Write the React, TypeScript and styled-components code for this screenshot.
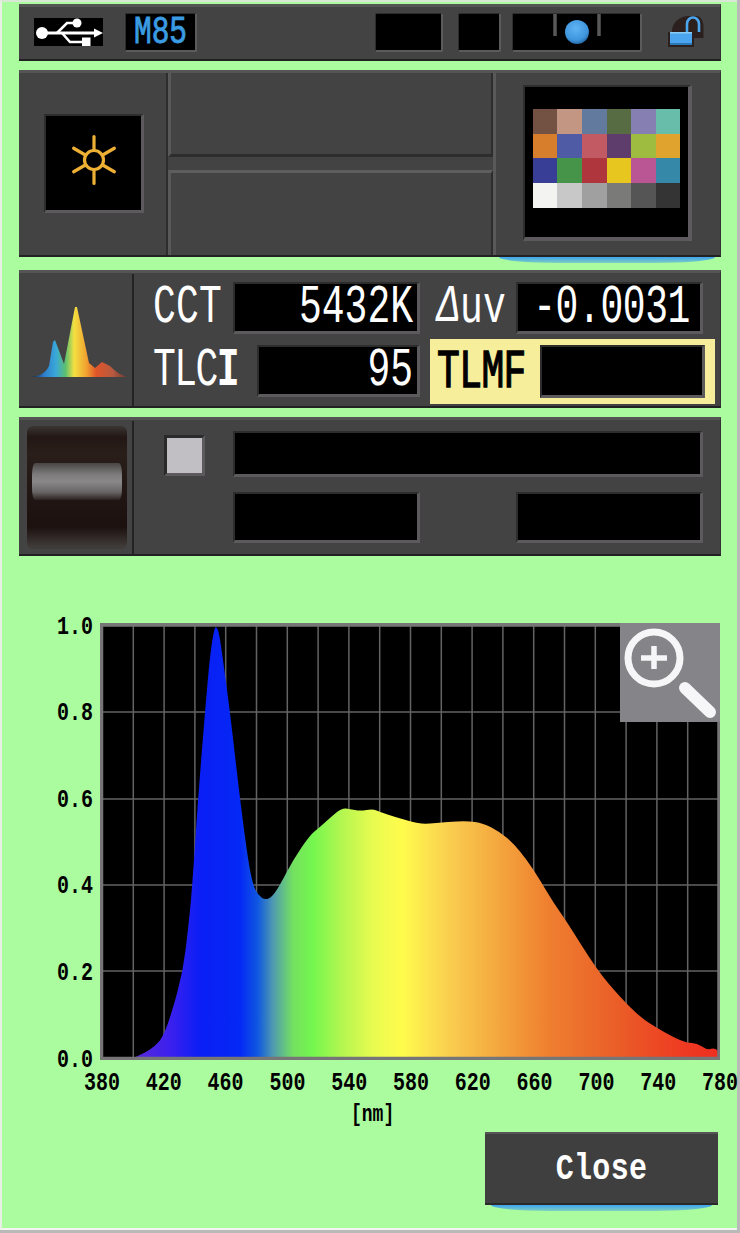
import React from "react";
import styled, { createGlobalStyle } from "styled-components";

const Global = createGlobalStyle`
  html, body { margin: 0; padding: 0; background: #b9b9b9; }
`;

const Page = styled.div`
  width: 740px;
  height: 1233px;
  box-sizing: border-box;
  overflow: hidden;
  background: #b9b9b9;
  padding-right: 3px;
  padding-bottom: 3px;
`;

const Screen = styled.main`
  height: 100%;
  box-sizing: border-box;
  background: #abfb9f;
  border-left: 2px solid #e8f0e6;
  border-top: 2px solid #d8e8d4;
  border-bottom: 2px solid #f2f5f0;
  padding: 2px 0 0 17px;
  display: flex;
  flex-direction: column;
  font-family: "Liberation Mono", "DejaVu Sans Mono", monospace;
`;

const Panel = styled.section<{ $h: number; $mt: number }>`
  width: 702px;
  height: ${(p) => p.$h}px;
  margin-top: ${(p) => p.$mt}px;
  flex: none;
  box-sizing: border-box;
  background: #444344;
  border-top: 3px solid #565556;
  border-bottom: 2px solid #232223;
  border-right: 1px solid #343334;
  display: flex;
`;

const Field = styled.div<{ $w?: number; $h?: number; $radius?: number }>`
  box-sizing: border-box;
  width: ${(p) => (p.$w ? `${p.$w}px` : "auto")};
  height: ${(p) => (p.$h ? `${p.$h}px` : "auto")};
  flex: none;
  background: #000;
  border-top: 2px solid #2e2d2e;
  border-left: 2px solid #2e2d2e;
  border-right: 3px solid #5d5a5e;
  border-bottom: 3px solid #5d5a5e;
  border-radius: ${(p) => p.$radius ?? 0}px;
  display: flex;
  align-items: center;
  justify-content: flex-end;
`;

const StatusBar = styled(Panel)`
  align-items: flex-start;
  padding-top: 6px;
  padding-left: 15px;
`;

const UsbBox = styled.div`
  width: 69px;
  height: 28px;
  margin-top: 5px;
  background: #000;
  flex: none;
  display: flex;
`;

const Memory = styled(Field)`
  margin-left: 22px;
  justify-content: center;
  border-width: 1px 2px 2px 1px;
`;

const MemoryText = styled.span`
  color: #3a9ce2;
  font-size: 29.5px;
  line-height: 36px;
  -webkit-text-stroke: 0.7px #3a9ce2;
  transform: scaleY(1.32);
`;

const StatusSlot = styled(Field)<{ $ml: number }>`
  margin-left: ${(p) => p.$ml}px;
  border-width: 1px 2px 2px 1px;
`;

const LockWrap = styled.div`
  margin-left: 26px;
  margin-top: 2px;
  width: 36px;
  height: 33px;
  flex: none;
  display: flex;
`;

const SceneCell = styled.div`
  width: 149px;
  flex: none;
  box-sizing: border-box;
  border-right: 2px solid #2e2d2e;
  padding: 41px 0 0 25px;
`;

const SunBox = styled(Field)`
  justify-content: center;
  padding-bottom: 6px;
  border-width: 2px 3px 3px 2px;
`;

const NameStack = styled.div`
  width: 325px;
  flex: none;
  display: flex;
  flex-direction: column;
  justify-content: space-between;
`;

const NameTop = styled.div`
  height: 84px;
  box-sizing: border-box;
  border-left: 3px solid #5a595a;
  border-bottom: 3px solid #2e2d2e;
  border-right: 2px solid #2e2d2e;
`;

const NameBottom = styled.div`
  height: 85px;
  box-sizing: border-box;
  border-top: 3px solid #5f5e5f;
  border-left: 3px solid #5a595a;
  border-right: 2px solid #2e2d2e;
`;

const ChartCell = styled.div`
  flex: 1;
  position: relative;
  box-sizing: border-box;
  border-left: 3px solid #5a595a;
  padding: 12px 0 0 27px;
  &::after {
    content: "";
    position: absolute;
    left: 3px;
    right: 5px;
    bottom: -8px;
    height: 6px;
    background: linear-gradient(#3ea4ee, #7fcfc0);
    border-radius: 0 0 60px 60px / 0 0 6px 6px;
  }
`;

const ChartBox = styled(Field)`
  justify-content: center;
  align-items: flex-start;
  padding-top: 22px;
  border-width: 2px 4px 4px 2px;
`;

const Patches = styled.div`
  display: grid;
  grid-template-columns: repeat(6, 24.67px);
  grid-auto-rows: 24.67px;
`;

const Patch = styled.div<{ $c: string }>`
  background: ${(p) => p.$c};
`;

const IconCell = styled.div`
  width: 115px;
  flex: none;
  box-sizing: border-box;
  border-right: 2px solid #242324;
  margin-top: 1px;
  display: flex;
`;

const ReadingArea = styled.div`
  flex: 1;
  padding: 9px 0 0 19px;
  display: flex;
  flex-direction: column;
  gap: 5px;
`;

const ReadingRow = styled.div<{ $h: number }>`
  height: ${(p) => p.$h}px;
  display: flex;
  align-items: flex-start;
`;

const Label = styled.span<{ $w: number; $ml?: number; $mt?: number; $ls?: number }>`
  width: ${(p) => p.$w}px;
  margin-left: ${(p) => p.$ml ?? 0}px;
  margin-top: ${(p) => p.$mt ?? 0}px;
  flex: none;
  color: #fff;
  font-size: 38px;
  line-height: 52px;
  letter-spacing: ${(p) => p.$ls ?? 0.2}px;
  white-space: pre;
  transform: scaleY(1.42);
  transform-origin: 0 50%;
`;

const DarkLabel = styled(Label)`
  color: #000;
  -webkit-text-stroke: 1px #000;
`;

const BoldI = styled.span`
  font-weight: 700;
`;

const Delta = styled.span`
  font-style: italic;
`;

const Value = styled.span`
  color: #fff;
  font-size: 38px;
  line-height: 46px;
  padding-right: 4px;
  white-space: pre;
  transform: scaleY(1.42);
`;

const SlimValue = styled(Value)`
  padding-right: 10px;
  letter-spacing: -0.4px;
`;

const ReadingField = styled(Field)<{ $mt?: number }>`
  margin-top: ${(p) => p.$mt ?? 0}px;
`;

const Highlight = styled.div`
  margin-left: 10px;
  width: 285px;
  height: 65px;
  box-sizing: border-box;
  background: #f6ee9a;
  padding: 6px 0 0 7px;
  display: flex;
  align-items: flex-start;
`;

const Roller = styled.div`
  width: 100px;
  height: 123px;
  margin: 5px 0 0 8px;
  flex: none;
  border-radius: 6px;
  background: linear-gradient(#3a3533 0, #221714 9%, #2a1e1a 22%, #201512 60%, #1c110f 82%, #3f3b39 98%);
  padding: 37px 5px 0;
  box-sizing: border-box;
`;

const RollerBand = styled.div`
  height: 37px;
  border-radius: 3px / 12px;
  background: linear-gradient(#4a4545 0, #7c7a7b 30%, #8a8889 50%, #6a6667 78%, #3a3230 95%, #2a211f 100%);
`;

const FilterGrid = styled.div`
  flex: 1;
  padding: 11px 0 0 0;
  display: grid;
  grid-template-columns: 99px 187px 96px 187px;
  grid-template-rows: 46px 51px;
  row-gap: 15px;
  align-content: start;
`;

const Swatch = styled.div`
  width: 41px;
  height: 41px;
  margin: 4px 0 0 30px;
  box-sizing: border-box;
  background: #c2bfc4;
  border: 3px solid #2b2a2b;
  border-right-color: #5d5a5e;
  border-bottom-color: #5d5a5e;
`;

const WideField = styled(Field)`
  grid-column: 2 / 5;
`;

const SecondField = styled(Field)`
  grid-column: 2;
`;

const ThirdField = styled(Field)`
  grid-column: 4;
`;

const ChartGrid = styled.div`
  margin-top: 61px;
  margin-left: 38px;
  width: 681px;
  display: grid;
  grid-template-columns: 36px 620px;
  column-gap: 7px;
  flex: none;
`;

const YAxis = styled.div`
  height: 450px;
  margin-top: 2px;
  display: flex;
  flex-direction: column;
  justify-content: space-between;
`;

const Tick = styled.span`
  display: block;
  height: 18px;
  color: #000;
  font-size: 20px;
  font-weight: 700;
  line-height: 18px;
  white-space: pre;
  transform: scaleY(1.3);
`;

const Plot = styled.div`
  position: relative;
  width: 620px;
  height: 437px;
  margin-top: 6px;
`;

const ZoomButton = styled.div`
  position: absolute;
  top: 0;
  right: 0;
  width: 100px;
  height: 99px;
  background: #858488;
  display: flex;
`;

const XAxis = styled.div`
  grid-column: 1 / 3;
  margin-top: 5px;
  margin-left: 27px;
  width: 654px;
  display: flex;
  justify-content: space-between;
`;

const XTick = styled(Tick)`
  width: 36px;
  text-align: center;
`;

const Unit = styled(Tick)`
  grid-column: 1 / 3;
  margin: 13px 0 0 294px;
  font-size: 18px;
`;

const CloseButton = styled.div`
  position: relative;
  margin: 9px 0 0 466px;
  width: 233px;
  height: 73px;
  flex: none;
  box-sizing: border-box;
  background: #3f3f40;
  border-top: 2px solid #555;
  border-bottom: 2px solid #2a2a2a;
  color: #fff;
  font-size: 30px;
  font-weight: 700;
  letter-spacing: 0.3px;
  display: flex;
  align-items: center;
  justify-content: center;
  &::after {
    content: "";
    position: absolute;
    left: 6px;
    right: 6px;
    bottom: -8px;
    height: 6px;
    background: linear-gradient(#3ea4ee, #7fcfc0);
    border-radius: 0 0 60px 60px / 0 0 6px 6px;
  }
`;

const CloseText = styled.span`
  transform: scaleY(1.25);
`;

const patches = [
  "#735244", "#c29682", "#627a9d", "#576c43", "#8580b1", "#67bdaa",
  "#d67e2c", "#505ba6", "#c15a63", "#5e3c6c", "#9dbc40", "#e0a32e",
  "#383d96", "#469449", "#af363c", "#e7c71f", "#bb5695", "#3688a8",
  "#f3f3f2", "#c8c8c8", "#a0a0a0", "#7a7a79", "#555555", "#343434",
];

const Usb = () => (
  <svg width="69" height="28" viewBox="0 0 69 28">
    <g fill="#fff" stroke="#fff">
      <circle cx="8" cy="15" r="6" stroke="none" />
      <path d="M8 15H62" strokeWidth="2.8" fill="none" />
      <path d="M60 10.5l9 4.5-9 4.500z" stroke="none" />
      <path d="M23 15l10-10h8" strokeWidth="2.6" fill="none" />
      <path d="M28 15l8 9h14" strokeWidth="2.6" fill="none" />
      <circle cx="43" cy="5" r="4.500" stroke="none" />
      <rect x="48" y="19.500" width="8.500" height="8.500" stroke="none" />
    </g>
  </svg>
);

const Lock = () => (
  <svg width="36" height="33" viewBox="0 0 36 33">
    <path d="M4 17C4 8 10 2 20 1H28C33 1 35.500 6 35.500 12V23H26V32H0V17Z" fill="#2b201d" />
    <rect x="2" y="17" width="22" height="13" fill="#4aa5ee" />
    <rect x="2" y="28" width="22" height="2" fill="#2b78b8" />
    <rect x="2" y="17" width="22" height="1.500" fill="#8ccbf6" />
    <path d="M19 17V9C19 5 22 2.500 25 2.500S31 5 31 9V17" fill="none" stroke="#4ba6ee" strokeWidth="2.600" />
  </svg>
);

const Sun = () => (
  <svg width="52" height="52" viewBox="-26 -26 52 52">
    <g stroke="#edb034" strokeWidth="3.200" strokeLinecap="round" fill="none">
      <circle r="9.500" />
      {[0, 60, 120, 180, 240, 300].map((a) => (
        <line key={a} x1="0" y1="-10" x2="0" y2="-23.500" transform={`rotate(${a})`} />
      ))}
    </g>
  </svg>
);

const smooth = (p: number[][]) => {
  let d = `M${p[0][0]} ${p[0][1]}`;
  for (let i = 1; i < p.length - 1; i++) {
    const mx = (p[i][0] + p[i + 1][0]) / 2;
    const my = (p[i][1] + p[i + 1][1]) / 2;
    d += `Q${p[i][0]} ${p[i][1]} ${mx} ${my}`;
  }
  const l = p[p.length - 1];
  return `${d}L${l[0]} ${l[1]}`;
};

const MiniSpectrum = () => (
  <svg width="113" height="134" viewBox="0 0 113 134">
    <defs>
      <linearGradient id="mini" x1="0" x2="1" y1="0" y2="0">
        <stop offset="0" stopColor="#14264a" />
        <stop offset="0.14" stopColor="#2d7fd0" />
        <stop offset="0.26" stopColor="#3aa8d8" />
        <stop offset="0.36" stopColor="#5cc070" />
        <stop offset="0.45" stopColor="#f4e040" />
        <stop offset="0.58" stopColor="#f0a030" />
        <stop offset="0.68" stopColor="#e05528" />
        <stop offset="0.85" stopColor="#b85a40" />
        <stop offset="1" stopColor="#6a3a30" />
      </linearGradient>
    </defs>
    <path
      d="M12 103C20 102 26 100 30 92L34 68L36 66L45 90L56 33L58 33L70 89L76 94L83 88L91 92C97 98 100 100 108 103Z"
      fill="url(#mini)"
    />
  </svg>
);

const OX = 100;
const OY = 623;
const outline = [
  [133, 1058], [145, 1053], [155, 1046], [163, 1037], [172, 1012], [183, 971], [188, 930], [192, 890],
  [198, 799], [205, 712], [210, 655], [214, 630], [216, 626], [219, 632], [223, 660], [230, 712],
  [240, 799], [248, 860], [253, 885], [258, 895], [265, 900], [272, 897], [280, 885], [293, 860],
  [310, 835], [320, 827], [332, 816], [342, 808], [350, 809], [360, 811], [373, 809], [380, 812],
  [395, 817], [413, 822], [423, 824], [437, 823], [447, 822], [467, 821], [483, 823], [500, 832],
  [513, 843], [527, 860], [540, 880], [553, 902], [567, 922], [597, 970], [620, 997], [640, 1017],
  [657, 1028], [673, 1037], [687, 1043], [697, 1043], [707, 1050], [713, 1048], [718, 1050], [718, 1058],
].map(([x, y]) => [x - OX, y - OY]);

const stops: [number, string][] = [
  [133, "#5a2bd8"], [170, "#3c20ee"], [200, "#0a1ef5"], [240, "#0428f5"], [258, "#1058e0"],
  [273, "#4f9ab0"], [293, "#74e060"], [313, "#74f74e"], [340, "#b0f650"], [373, "#e8fb50"],
  [403, "#fffb4c"], [447, "#fad050"], [497, "#f4a83e"], [547, "#ef8030"], [613, "#ea6028"],
  [680, "#ee3c22"], [718, "#ee2e20"],
];

const Spectrum = () => (
  <svg width="620" height="437" viewBox="0 0 620 437">
    <defs>
      <linearGradient id="spec" gradientUnits="userSpaceOnUse" x1="33" x2="618" y1="0" y2="0">
        {stops.map(([x, c]) => (
          <stop key={x} offset={(x - 133) / 585} stopColor={c} />
        ))}
      </linearGradient>
    </defs>
    <rect width="620" height="437" fill="#000" />
    <g stroke="#646364" strokeWidth="1.500">
      {Array.from({ length: 19 }, (_, i) => (
        <line key={i} x1={33.3 + i * 30.8} x2={33.3 + i * 30.8} y1="3" y2="434" />
      ))}
      {[89, 176, 262, 348].map((y) => (
        <line key={y} x1="3" x2="618" y1={y} y2={y} />
      ))}
    </g>
    <path d={`${smooth(outline)}L33 435Z`} fill="url(#spec)" />
    <path d="M1.500 2V435.500H619V2Z M0 1.500H620" fill="none" stroke="#777677" strokeWidth="3.500" />
  </svg>
);

const Magnifier = () => (
  <svg width="100" height="99" viewBox="0 0 100 99">
    <circle cx="34" cy="35" r="26" fill="none" stroke="#f6f5f7" strokeWidth="7" />
    <path d="M34 23V46M21 35H47" stroke="#f6f5f7" strokeWidth="5.500" />
    <path d="M65 65L90 89" stroke="#f6f5f7" strokeWidth="12" strokeLinecap="round" />
  </svg>
);

const Selector = () => (
  <svg width="126" height="36" viewBox="0 0 126 36">
    <defs>
      <radialGradient id="ball" cx="0.45" cy="0.35" r="0.7">
        <stop offset="0" stopColor="#5fb4f5" />
        <stop offset="0.7" stopColor="#3f95dd" />
        <stop offset="1" stopColor="#1e5f9c" />
      </radialGradient>
    </defs>
    <path d="M41 0V22M85 0V22" stroke="#5a585a" strokeWidth="3.500" />
    <circle cx="63" cy="18" r="12" fill="url(#ball)" />
  </svg>
);

const yTicks = ["1.0", "0.8", "0.6", "0.4", "0.2", "0.0"];
const xTicks = ["380", "420", "460", "500", "540", "580", "620", "660", "700", "740", "780"];

export default function App() {
  return (
    <Page>
      <Global />
      <Screen>
        <StatusBar $h={57} $mt={0}>
          <UsbBox><Usb /></UsbBox>
          <Memory $w={72} $h={39}><MemoryText>M85</MemoryText></Memory>
          <StatusSlot $ml={178} $w={68} $h={39} $radius={2} />
          <StatusSlot $ml={15} $w={43} $h={39} $radius={2} />
          <StatusSlot $ml={11} $w={130} $h={39} $radius={2}><Selector /></StatusSlot>
          <LockWrap><Lock /></LockWrap>
        </StatusBar>

        <Panel $h={187} $mt={9}>
          <SceneCell>
            <SunBox $w={100} $h={99}><Sun /></SunBox>
          </SceneCell>
          <NameStack>
            <NameTop />
            <NameBottom />
          </NameStack>
          <ChartCell>
            <ChartBox $w={169} $h={156}>
              <Patches>
                {patches.map((c, i) => <Patch key={i} $c={c} />)}
              </Patches>
            </ChartBox>
          </ChartCell>
        </Panel>

        <Panel $h={138} $mt={13}>
          <IconCell><MiniSpectrum /></IconCell>
          <ReadingArea>
            <ReadingRow $h={52}>
              <Label $w={80}>CCT</Label>
              <ReadingField $w={187} $h={52}><Value>5432K</Value></ReadingField>
              <Label $w={79} $ml={17}><Delta>Δ</Delta>uv</Label>
              <ReadingField $w={187} $h={52}><SlimValue>-0.0031</SlimValue></ReadingField>
            </ReadingRow>
            <ReadingRow $h={65}>
              <Label $w={104} $mt={6} $ls={-1.6}>TLC<BoldI>I</BoldI></Label>
              <ReadingField $w={163} $h={52} $mt={6}><Value>95</Value></ReadingField>
              <Highlight>
                <DarkLabel $w={103} $mt={2} $ls={-0.6}>TLMF</DarkLabel>
                <Field $w={165} $h={53} />
              </Highlight>
            </ReadingRow>
          </ReadingArea>
        </Panel>

        <Panel $h={139} $mt={9}>
          <IconCell>
            <Roller><RollerBand /></Roller>
          </IconCell>
          <FilterGrid>
            <Swatch />
            <WideField />
            <SecondField />
            <ThirdField />
          </FilterGrid>
        </Panel>

        <ChartGrid>
          <YAxis>
            {yTicks.map((t) => <Tick key={t}>{t}</Tick>)}
          </YAxis>
          <Plot>
            <Spectrum />
            <ZoomButton><Magnifier /></ZoomButton>
          </Plot>
          <XAxis>
            {xTicks.map((t) => <XTick key={t}>{t}</XTick>)}
          </XAxis>
          <Unit>[nm]</Unit>
        </ChartGrid>

        <CloseButton><CloseText>Close</CloseText></CloseButton>
      </Screen>
    </Page>
  );
}
